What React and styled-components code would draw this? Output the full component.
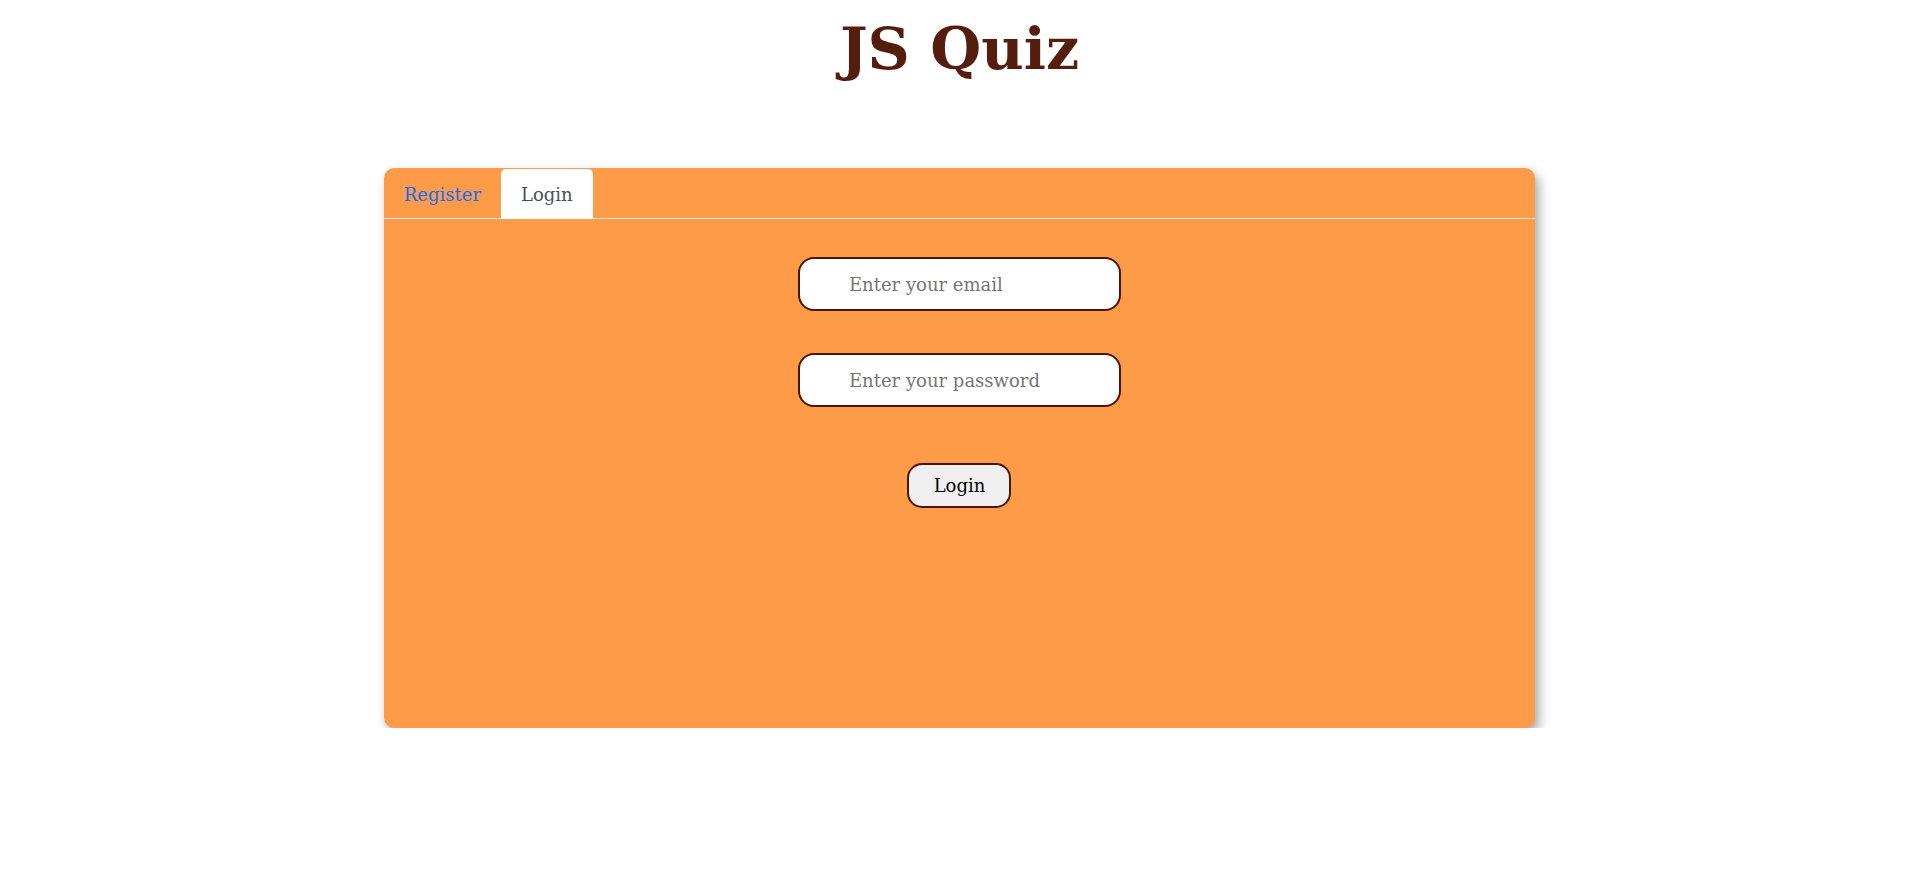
import React, { useState } from "react";
import styled, { createGlobalStyle } from "styled-components";

const Global = createGlobalStyle`
  html, body { margin: 0; padding: 0; background: #ffffff; }
  body { font-family: "DejaVu Serif", Georgia, serif; }
  * { box-sizing: border-box; }
`;

const Page = styled.div`
  display: flex;
  flex-direction: column;
  align-items: center;
  padding-top: 12px;
`;

const Title = styled.h1`
  margin: 0;
  font-size: 58.5px;
  line-height: 74px;
  font-weight: 700;
  color: #541d0e;
`;

const Card = styled.section`
  width: 60%;
  height: 560px;
  margin-top: 82px;
  background: #fe9b48;
  border-radius: 10px;
  box-shadow: 4px 6px 12px rgba(0, 0, 0, 0.35);
  display: flex;
  flex-direction: column;
`;

const TabBar = styled.nav`
  display: flex;
  padding-top: 1px;
  border-bottom: 1px solid #e6e6e6;
`;

const Tab = styled.button`
  height: 50px;
  margin-bottom: -1px;
  padding: 0 20px;
  border: none;
  border-radius: 5px 5px 0 0;
  font-family: inherit;
  font-size: 18px;
  cursor: pointer;
  background: ${(p) => (p.$active ? "#ffffff" : "transparent")};
  color: ${(p) => (p.$active ? "#495057" : "#0d6efd")};
`;

const Form = styled.form`
  display: flex;
  flex-direction: column;
  align-items: center;
  padding-top: 38px;
`;

const Input = styled.input`
  width: 323px;
  height: 54px;
  margin-bottom: ${(p) => p.$gap}px;
  padding: 0 0 0 49px;
  border: 2px solid #4a1508;
  border-radius: 16px;
  background: #ffffff;
  font-family: inherit;
  font-size: 18px;
  color: #222;
  outline: none;
  &::placeholder { color: #757575; }
`;

const SubmitButton = styled.button`
  width: 104px;
  height: 45px;
  border: 2px solid #4a1508;
  border-radius: 15px;
  background: #efefef;
  font-family: inherit;
  font-size: 18px;
  color: #000;
  cursor: pointer;
`;

export default function App() {
  const [tab, setTab] = useState("login");
  return (
    <>
      <Global />
      <Page>
        <Title>JS Quiz</Title>
        <Card>
          <TabBar>
            <Tab $active={tab === "register"} onClick={() => setTab("register")}>
              Register
            </Tab>
            <Tab $active={tab === "login"} onClick={() => setTab("login")}>
              Login
            </Tab>
          </TabBar>
          <Form onSubmit={(e) => e.preventDefault()}>
            <Input type="email" placeholder="Enter your email" $gap={42} />
            <Input type="password" placeholder="Enter your password" $gap={56} />
            <SubmitButton type="submit">Login</SubmitButton>
          </Form>
        </Card>
      </Page>
    </>
  );
}
